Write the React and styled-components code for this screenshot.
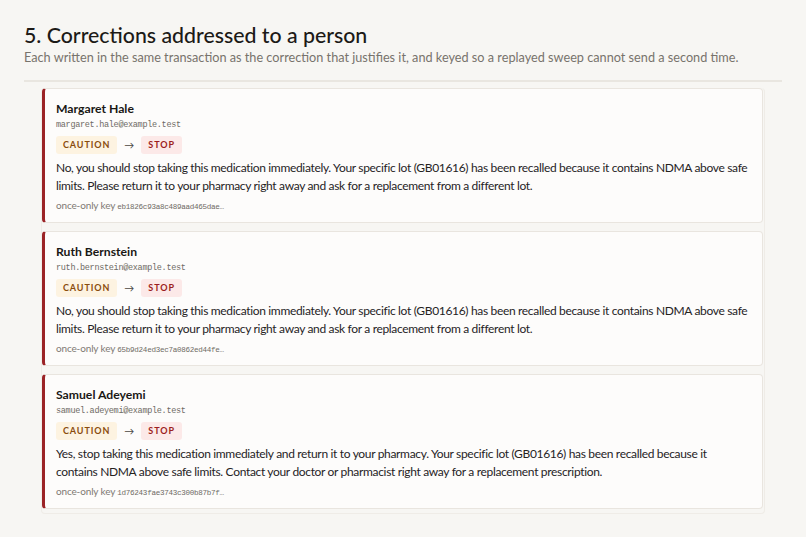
import React from "react";
import styled, { createGlobalStyle } from "styled-components";

const GlobalStyle = createGlobalStyle`
  html, body {
    margin: 0;
    background: #f7f6f3;
  }
  body {
    font-family: Lato, "Noto Sans", sans-serif;
    color: #1f1d1a;
  }
`;

const people = [
    {
        name: "Margaret Hale",
        email: "margaret.hale@example.test",
        text: "No, you should stop taking this medication immediately. Your specific lot (GB01616) has been recalled because it contains NDMA above safe limits. Please return it to your pharmacy right away and ask for a replacement from a different lot.",
        key: "eb1826c93a8c489aad465dae…",
    },
    {
        name: "Ruth Bernstein",
        email: "ruth.bernstein@example.test",
        text: "No, you should stop taking this medication immediately. Your specific lot (GB01616) has been recalled because it contains NDMA above safe limits. Please return it to your pharmacy right away and ask for a replacement from a different lot.",
        key: "65b9d24ed3ec7a0862ed44fe…",
    },
    {
        name: "Samuel Adeyemi",
        email: "samuel.adeyemi@example.test",
        text: "Yes, stop taking this medication immediately and return it to your pharmacy. Your specific lot (GB01616) has been recalled because it contains NDMA above safe limits. Contact your doctor or pharmacist right away for a replacement prescription.",
        key: "1d76243fae3743c300b87b7f…",
    },
];

const App = () => {
    return (
        <Page>
            <GlobalStyle/>
            <Header>
                <Title>5. Corrections addressed to a person</Title>
                <Subtitle>
                    Each written in the same transaction as the correction that justifies it, and keyed so a replayed sweep cannot send a second time.
                </Subtitle>
            </Header>
            <List>
                {people.map((p) => (
                    <Card key={p.email}>
                        <Name>{p.name}</Name>
                        <Email>{p.email}</Email>
                        <BadgeRow>
                            <Badge tone="caution">CAUTION</Badge>
                            <Arrow>→</Arrow>
                            <Badge tone="stop">STOP</Badge>
                        </BadgeRow>
                        <Message>{p.text}</Message>
                        <KeyLine>
                            once-only key <KeyCode>{p.key}</KeyCode>
                        </KeyLine>
                    </Card>
                ))}
            </List>
        </Page>
    );
}

const Page = styled.div`
  padding: 22px 24px 24px 24px;
`

const Header = styled.header`
  padding-bottom: 14px;
  border-bottom: 2px solid #e9e6e0;
`

const Title = styled.h2`
  margin: 0;
  font-size: 21.3px;
  line-height: 27px;
  font-weight: 500;
  color: #1c1a17;
`

const Subtitle = styled.p`
  margin: 0;
  font-size: 12.7px;
  line-height: 17px;
  color: #77736c;
`

const List = styled.div`
  margin: 6px 17px 0 17px;
  padding-bottom: 4px;
  display: flex;
  flex-direction: column;
  gap: 8px;
  border: 1px solid #efece7;
  border-top: none;
  border-radius: 4px;
`

const Card = styled.div`
  background: #fdfcfb;
  border: 1px solid #e9e5df;
  border-left: 3px solid #9b2326;
  border-radius: 4px;
  margin-right: 1px;
  padding: 11px 12px 8px 11px;
`

const Name = styled.div`
  font-size: 12.2px;
  line-height: 17px;
  font-weight: 700;
  color: #1a1815;
`

const Email = styled.div`
  margin-top: 2px;
  font-family: "Liberation Mono", monospace;
  font-size: 8.5px;
  letter-spacing: -0.3px;
  line-height: 12px;
  color: #6f6b65;
`

const BadgeRow = styled.div`
  display: flex;
  align-items: center;
  gap: 7px;
  margin-top: 5px;
`

const Badge = styled.span`
  display: inline-block;
  padding: 0 7px;
  height: 18px;
  line-height: 18px;
  border-radius: 3px;
  font-size: 9px;
  font-weight: 700;
  letter-spacing: 0.9px;
  background: ${(p) => (p.tone === "stop" ? "#fce9e8" : "#fdf3e1")};
  color: ${(p) => (p.tone === "stop" ? "#9c1d20" : "#8a4c0c")};
`

const Arrow = styled.span`
  font-size: 10px;
  color: #4a4742;
`

const Message = styled.p`
  margin: 5px 0 0 0;
  font-size: 12px;
  letter-spacing: -0.33px;
  line-height: 18px;
  color: #26231f;
`

const KeyLine = styled.div`
  margin-top: 3px;
  font-size: 10px;
  letter-spacing: -0.15px;
  line-height: 14px;
  color: #7d7973;
`

const KeyCode = styled.span`
  font-family: "Liberation Mono", monospace;
  font-size: 7.6px;
  letter-spacing: -0.3px;
  color: #6f6b65;
`

export default App;
